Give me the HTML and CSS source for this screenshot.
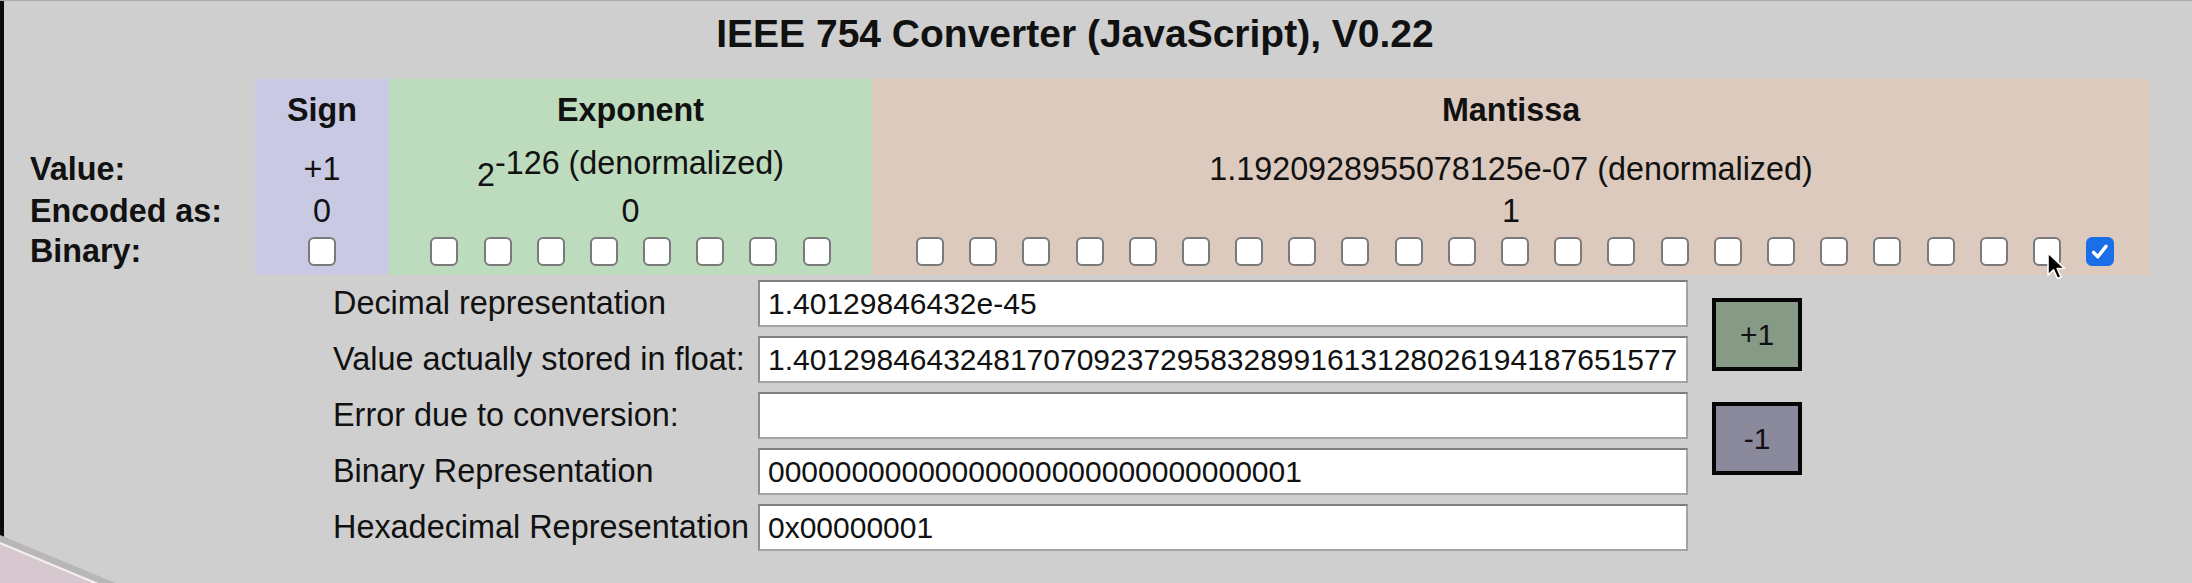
FILE: index.html
```html
<!DOCTYPE html>
<html lang="en">
<head>
<meta charset="utf-8">
<title>IEEE 754 Converter</title>
<link rel="stylesheet" href="styles.css">
</head>
<body>
<div class="page">
  <h1 class="title">IEEE 754 Converter (JavaScript), V0.22</h1>

  <div class="bits">
    <div class="cell lab hdr"></div>
    <div class="cell s hdr">Sign</div>
    <div class="cell e hdr">Exponent</div>
    <div class="cell m hdr">Mantissa</div>

    <div class="cell lab val">Value:</div>
    <div class="cell s val">+1</div>
    <div class="cell e val expval">2<sup class="pow">-126 (denormalized)</sup></div>
    <div class="cell m val">1.1920928955078125e-07 (denormalized)</div>

    <div class="cell lab enc">Encoded as:</div>
    <div class="cell s enc">0</div>
    <div class="cell e enc">0</div>
    <div class="cell m enc">1</div>

    <div class="cell lab binlab">Binary:</div>
    <div class="cell s boxes"><span class="cb"></span></div>
    <div class="cell e boxes">
      <span class="cb"></span><span class="cb"></span><span class="cb"></span><span class="cb"></span>
      <span class="cb"></span><span class="cb"></span><span class="cb"></span><span class="cb"></span>
    </div>
    <div class="cell m boxes mboxes">
      <span class="cb"></span><span class="cb"></span><span class="cb"></span><span class="cb"></span>
      <span class="cb"></span><span class="cb"></span><span class="cb"></span><span class="cb"></span>
      <span class="cb"></span><span class="cb"></span><span class="cb"></span><span class="cb"></span>
      <span class="cb"></span><span class="cb"></span><span class="cb"></span><span class="cb"></span>
      <span class="cb"></span><span class="cb"></span><span class="cb"></span><span class="cb"></span>
      <span class="cb"></span><span class="cb"></span>
      <span class="cb on"><svg class="tick" viewBox="0 0 28 28" width="24" height="24"><path d="M6.5 14.5 L11.5 19.5 L21 7.5" fill="none" stroke="#fff" stroke-width="4" stroke-linecap="round" stroke-linejoin="round"/></svg></span>
    </div>
  </div>

  <div class="lower">
    <div class="fields">
      <div class="field"><label class="flabel">Decimal representation</label><input class="finput" type="text" value="1.40129846432e-45"></div>
      <div class="field"><label class="flabel">Value actually stored in float:</label><input class="finput" type="text" value="1.40129846432481707092372958328991613128026194187651577175706828388979108268586060148663818836212158203125e-45"></div>
      <div class="field"><label class="flabel">Error due to conversion:</label><input class="finput" type="text" value=""></div>
      <div class="field"><label class="flabel">Binary Representation</label><input class="finput" type="text" value="00000000000000000000000000000001"></div>
      <div class="field"><label class="flabel">Hexadecimal Representation</label><input class="finput" type="text" value="0x00000001"></div>
    </div>
    <div class="btns">
      <button class="btn plus" type="button">+1</button>
      <button class="btn minus" type="button">-1</button>
    </div>
  </div>
</div>

<svg class="cursor" width="22" height="32" viewBox="0 0 22 32">
  <path d="M2 2 L2 24 L7.5 18.8 L11.5 27.5 L15 26 L11.2 17.5 L18.5 17.5 Z" fill="#000" stroke="#fff" stroke-width="1.6" stroke-linejoin="round"/>
</svg>

<svg class="corner" width="120" height="53" viewBox="0 0 120 53">
  <polygon points="0,4 0,12 100,53 118,53" fill="#b9b6b8"/>
  <polygon points="0,12 0,53 100,53" fill="#d7c7cf"/>
  <line x1="0" y1="12" x2="98" y2="53" stroke="#f3eef1" stroke-width="2.2"/>
</svg>
</body>
</html>
```

FILE: styles.css
```css
* { box-sizing: border-box; }

html, body {
  margin: 0;
  padding: 0;
}

body {
  width: 2192px;
  height: 583px;
  overflow: hidden;
  position: relative;
  background: #cfcfcf;
  border-top: 1px solid #a9a9a9;
  font-family: "Liberation Sans", Arial, Helvetica, sans-serif;
  color: #111;
}

.page {
  height: 582px;
  border-left: 4px solid #0c0c0c;
  padding-top: 11px;
}

.title {
  margin: 0;
  width: 2142px;
  text-align: center;
  font-size: 39px;
  line-height: 44px;
  font-weight: bold;
}

/* bit table */
.bits {
  display: grid;
  grid-template-columns: 251px 134px 483px 1278px;
  grid-template-rows: 61px 53px 37px 45px;
  margin-top: 23px;
}

.cell {
  font-size: 32.3px;
  line-height: 37px;
  text-align: center;
  white-space: nowrap;
}

.s { background: #c9c9e3; }
.e { background: #bddbbd; }
.m { background: #dccabe; }

.lab {
  text-align: left;
  padding-left: 26px;
  font-weight: bold;
}

.hdr { padding-top: 13px; font-weight: bold; }
.val { padding-top: 11px; }
.expval { padding-top: 5px; }
.enc { padding-top: 0; }
.binlab { padding-top: 3px; }

.pow {
  font-size: 100%;
  vertical-align: 12px;
  line-height: 37px;
}

.boxes {
  display: flex;
  justify-content: center;
  align-items: flex-start;
  gap: 25.2px;
  padding-top: 7px;
}

.mboxes { padding-left: 8px; }

.cb {
  flex: none;
  width: 28px;
  height: 29px;
  background: #fff;
  border: 2px solid #7a7a7a;
  border-radius: 6px;
  display: flex;
  align-items: center;
  justify-content: center;
}

.cb.on {
  background: #1a6fe8;
  border-color: #1a6fe8;
}

.tick { display: block; }

/* lower form */
.lower {
  display: flex;
  align-items: flex-start;
  margin-top: 5px;
}

.fields {
  display: flex;
  flex-direction: column;
  gap: 9px;
  margin-left: 329px;
}

.field {
  display: flex;
  align-items: center;
  height: 47px;
}

.flabel {
  width: 425px;
  font-size: 32.4px;
  white-space: nowrap;
}

.finput {
  width: 930px;
  height: 47px;
  margin: 0;
  padding: 0 8px;
  border: 2px solid #a3a3a3;
  border-top-color: #7e7e7e;
  border-left-color: #8e8e8e;
  background: #fff;
  font-family: "Liberation Sans", Arial, Helvetica, sans-serif;
  font-size: 30px;
  color: #111;
  outline: none;
}

.btns {
  display: flex;
  flex-direction: column;
  gap: 31px;
  margin-left: 24px;
  padding-top: 18px;
}

.btn {
  width: 90px;
  height: 73px;
  margin: 0;
  padding: 0;
  border: 4px solid #050505;
  font-family: "Liberation Sans", Arial, Helvetica, sans-serif;
  font-size: 30px;
  color: #111;
}

.plus { background: #869a86; }
.minus { background: #8a8a9c; }

/* overlays */
.cursor {
  position: absolute;
  left: 2046px;
  top: 250px;
}

.corner {
  position: absolute;
  left: 0;
  top: 530px;
}
```
